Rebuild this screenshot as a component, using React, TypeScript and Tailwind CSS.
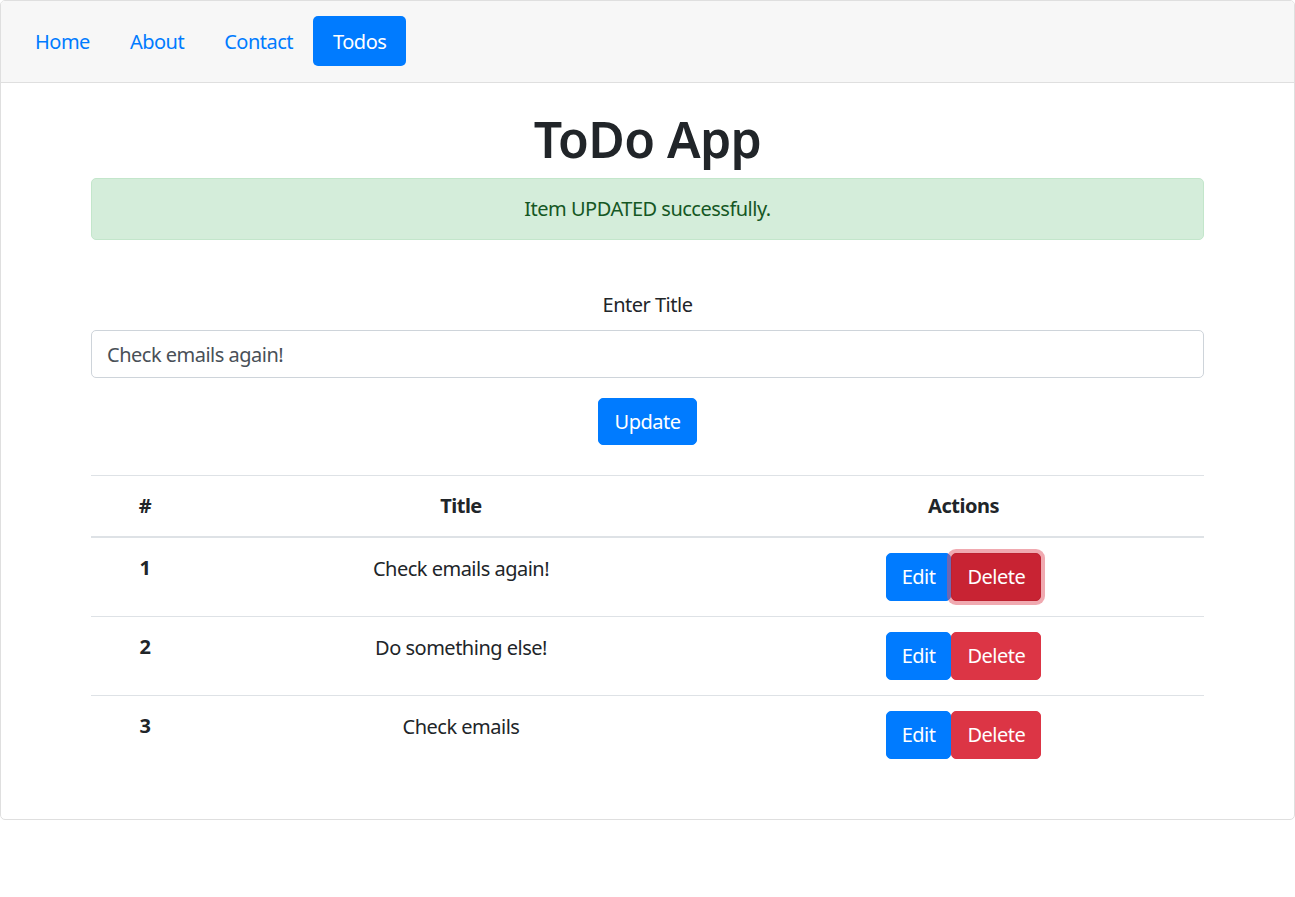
import React from "react";

const todos = [
  { id: 1, title: "Check emails again!", focused: true },
  { id: 2, title: "Do something else!", focused: false },
  { id: 3, title: "Check emails", focused: false },
];

export default function App() {
  return (
    <div className="font-['Noto_Sans',sans-serif] text-[20px] leading-[30px] tracking-[-0.5px] text-[#212529] bg-white min-h-[897px]">
      <div className="border border-[#dfdfdf] rounded-[5px] overflow-hidden">
        <div className="bg-[#f7f7f7] border-b border-[#dfdfdf] pt-[15px] pb-[16px] pl-[14px] flex">
          <a className="px-5 pt-[11px] pb-[9px] text-[#007bff] rounded-[5px]">Home</a>
          <a className="px-5 pt-[11px] pb-[9px] text-[#007bff] rounded-[5px]">About</a>
          <a className="px-5 pt-[11px] pb-[9px] text-[#007bff] rounded-[5px]">Contact</a>
          <a className="px-5 pt-[11px] pb-[9px] text-white bg-[#007bff] rounded-[5px]">Todos</a>
        </div>
        <div className="pt-[24px] pb-[25px]">
          <div className="w-[1113px] mx-auto">
            <h1 className="text-[50px] font-semibold leading-[60px] tracking-[-0.6px] text-center mb-[11px] pt-[2px] h-[60px]">ToDo App</h1>
            <div className="rounded-[5px] border border-[#c3e6cb] bg-[#d4edda] text-[#155724] py-[15px] px-[25px] text-center">
              Item UPDATED successfully.
            </div>
            <div className="mt-[50px] text-center mb-[10px]">Enter Title</div>
            <input
              className="block w-full h-[48px] border border-[#ced4da] rounded-[5px] px-[15px] text-[#495057] outline-none tracking-[-0.5px]"
              defaultValue="Check emails again!"
            />
            <div className="mt-[20px] flex justify-center">
              <button className="h-[47px] px-[16px] bg-[#007bff] border border-[#007bff] text-white rounded-[5px] tracking-[-0.5px]">Update</button>
            </div>
            <table className="mt-[30px] w-full border-collapse">
              <colgroup>
                <col className="w-[108px]" />
                <col className="w-[524px]" />
                <col />
              </colgroup>
              <thead>
                <tr>
                  <th className="border-t border-b-2 border-[#dee2e6] p-[15px] font-bold text-center">#</th>
                  <th className="border-t border-b-2 border-[#dee2e6] p-[15px] font-bold text-center">Title</th>
                  <th className="border-t border-b-2 border-[#dee2e6] p-[15px] font-bold text-center">Actions</th>
                </tr>
              </thead>
              <tbody>
                {todos.map((t, i) => (
                  <tr key={t.id}>
                    <th className={`${i > 0 ? "border-t border-[#dee2e6]" : ""} p-[15px] font-bold text-center align-top`}>{t.id}</th>
                    <td className={`${i > 0 ? "border-t border-[#dee2e6]" : ""} p-[15px] pt-[16px] text-center align-top`}>{t.title}</td>
                    <td className={`${i > 0 ? "border-t border-[#dee2e6]" : ""} p-[15px] align-top`}>
                      <div className="flex justify-center">
                        <button className="h-[48px] px-[15px] bg-[#007bff] border border-[#007bff] text-white rounded-[5px] tracking-[-0.5px]">Edit</button>
                        <button
                          className={
                            t.focused
                              ? "relative z-10 h-[48px] px-[15px] bg-[#c82333] border border-[#bd2130] text-white rounded-[5px] tracking-[-0.5px] shadow-[0_0_0_4px_rgba(225,83,97,0.5)]"
                              : "h-[48px] px-[15px] bg-[#dc3545] border border-[#dc3545] text-white rounded-[5px] tracking-[-0.5px]"
                          }
                        >
                          Delete
                        </button>
                      </div>
                    </td>
                  </tr>
                ))}
              </tbody>
            </table>
            <div className="h-[20px]" />
          </div>
        </div>
      </div>
    </div>
  );
}
